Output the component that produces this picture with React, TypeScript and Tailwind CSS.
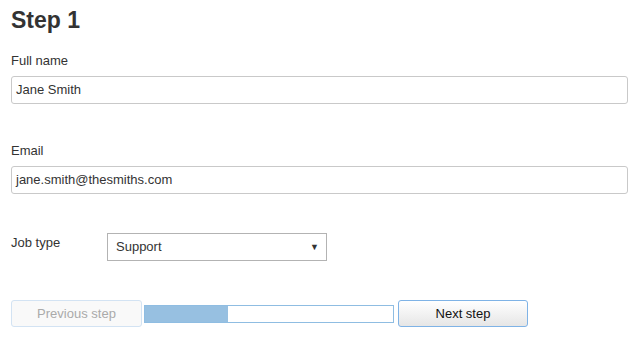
import React from 'react';

export default function App() {
  return (
    <div className="min-h-[340px] w-[641px] bg-white px-[11px] text-[#333] font-['Liberation_Sans',Arial,sans-serif]">
      <h1 className="pt-[7px] text-[23px] font-bold leading-[26px] text-[#333]">Step 1</h1>

      {/* Full name */}
      <div className="mt-[19px]">
        <label className="block text-[13px] leading-[18px]">Full name</label>
        <div className="mt-[6px] flex h-[28px] w-[617px] items-center rounded-[3px] border border-[#c9c9c9] px-[4px] text-[13px]">
          Jane Smith
        </div>
      </div>

      {/* Email */}
      <div className="mt-[38px]">
        <label className="block text-[13px] leading-[18px]">Email</label>
        <div className="mt-[6px] flex h-[28px] w-[617px] items-center rounded-[3px] border border-[#c9c9c9] px-[4px] text-[13px]">
          jane.smith@thesmiths.com
        </div>
      </div>

      {/* Job type */}
      <div className="mt-[39px] flex items-start">
        <label className="w-[96px] pt-[1px] text-[13px] leading-[18px]">Job type</label>
        <div className="flex h-[28px] w-[220px] items-center justify-between border border-[#b3b3b3] pl-[8px] pr-[7px] text-[13px]">
          <span>Support</span>
          <span className="text-[9px] leading-none text-[#333]">▼</span>
        </div>
      </div>

      {/* Navigation */}
      <div className="mt-[39px] flex items-center">
        <button className="h-[27px] w-[131px] rounded-[3px] border border-[#d3e3f3] bg-[#f9f9f9] text-[13px] text-[#aaa]">
          Previous step
        </button>
        <div className="ml-[2px] flex h-[18px] w-[250px] border border-[#8fbde2] bg-white">
          <div className="h-full w-[83px] bg-[#97c0e1]" />
        </div>
        <button className="ml-[4px] h-[27px] w-[130px] rounded-[3px] border border-[#7fb3e6] bg-gradient-to-b from-white to-[#e6e6e6] text-[13px] text-[#111]">
          Next step
        </button>
      </div>
    </div>
  );
}
